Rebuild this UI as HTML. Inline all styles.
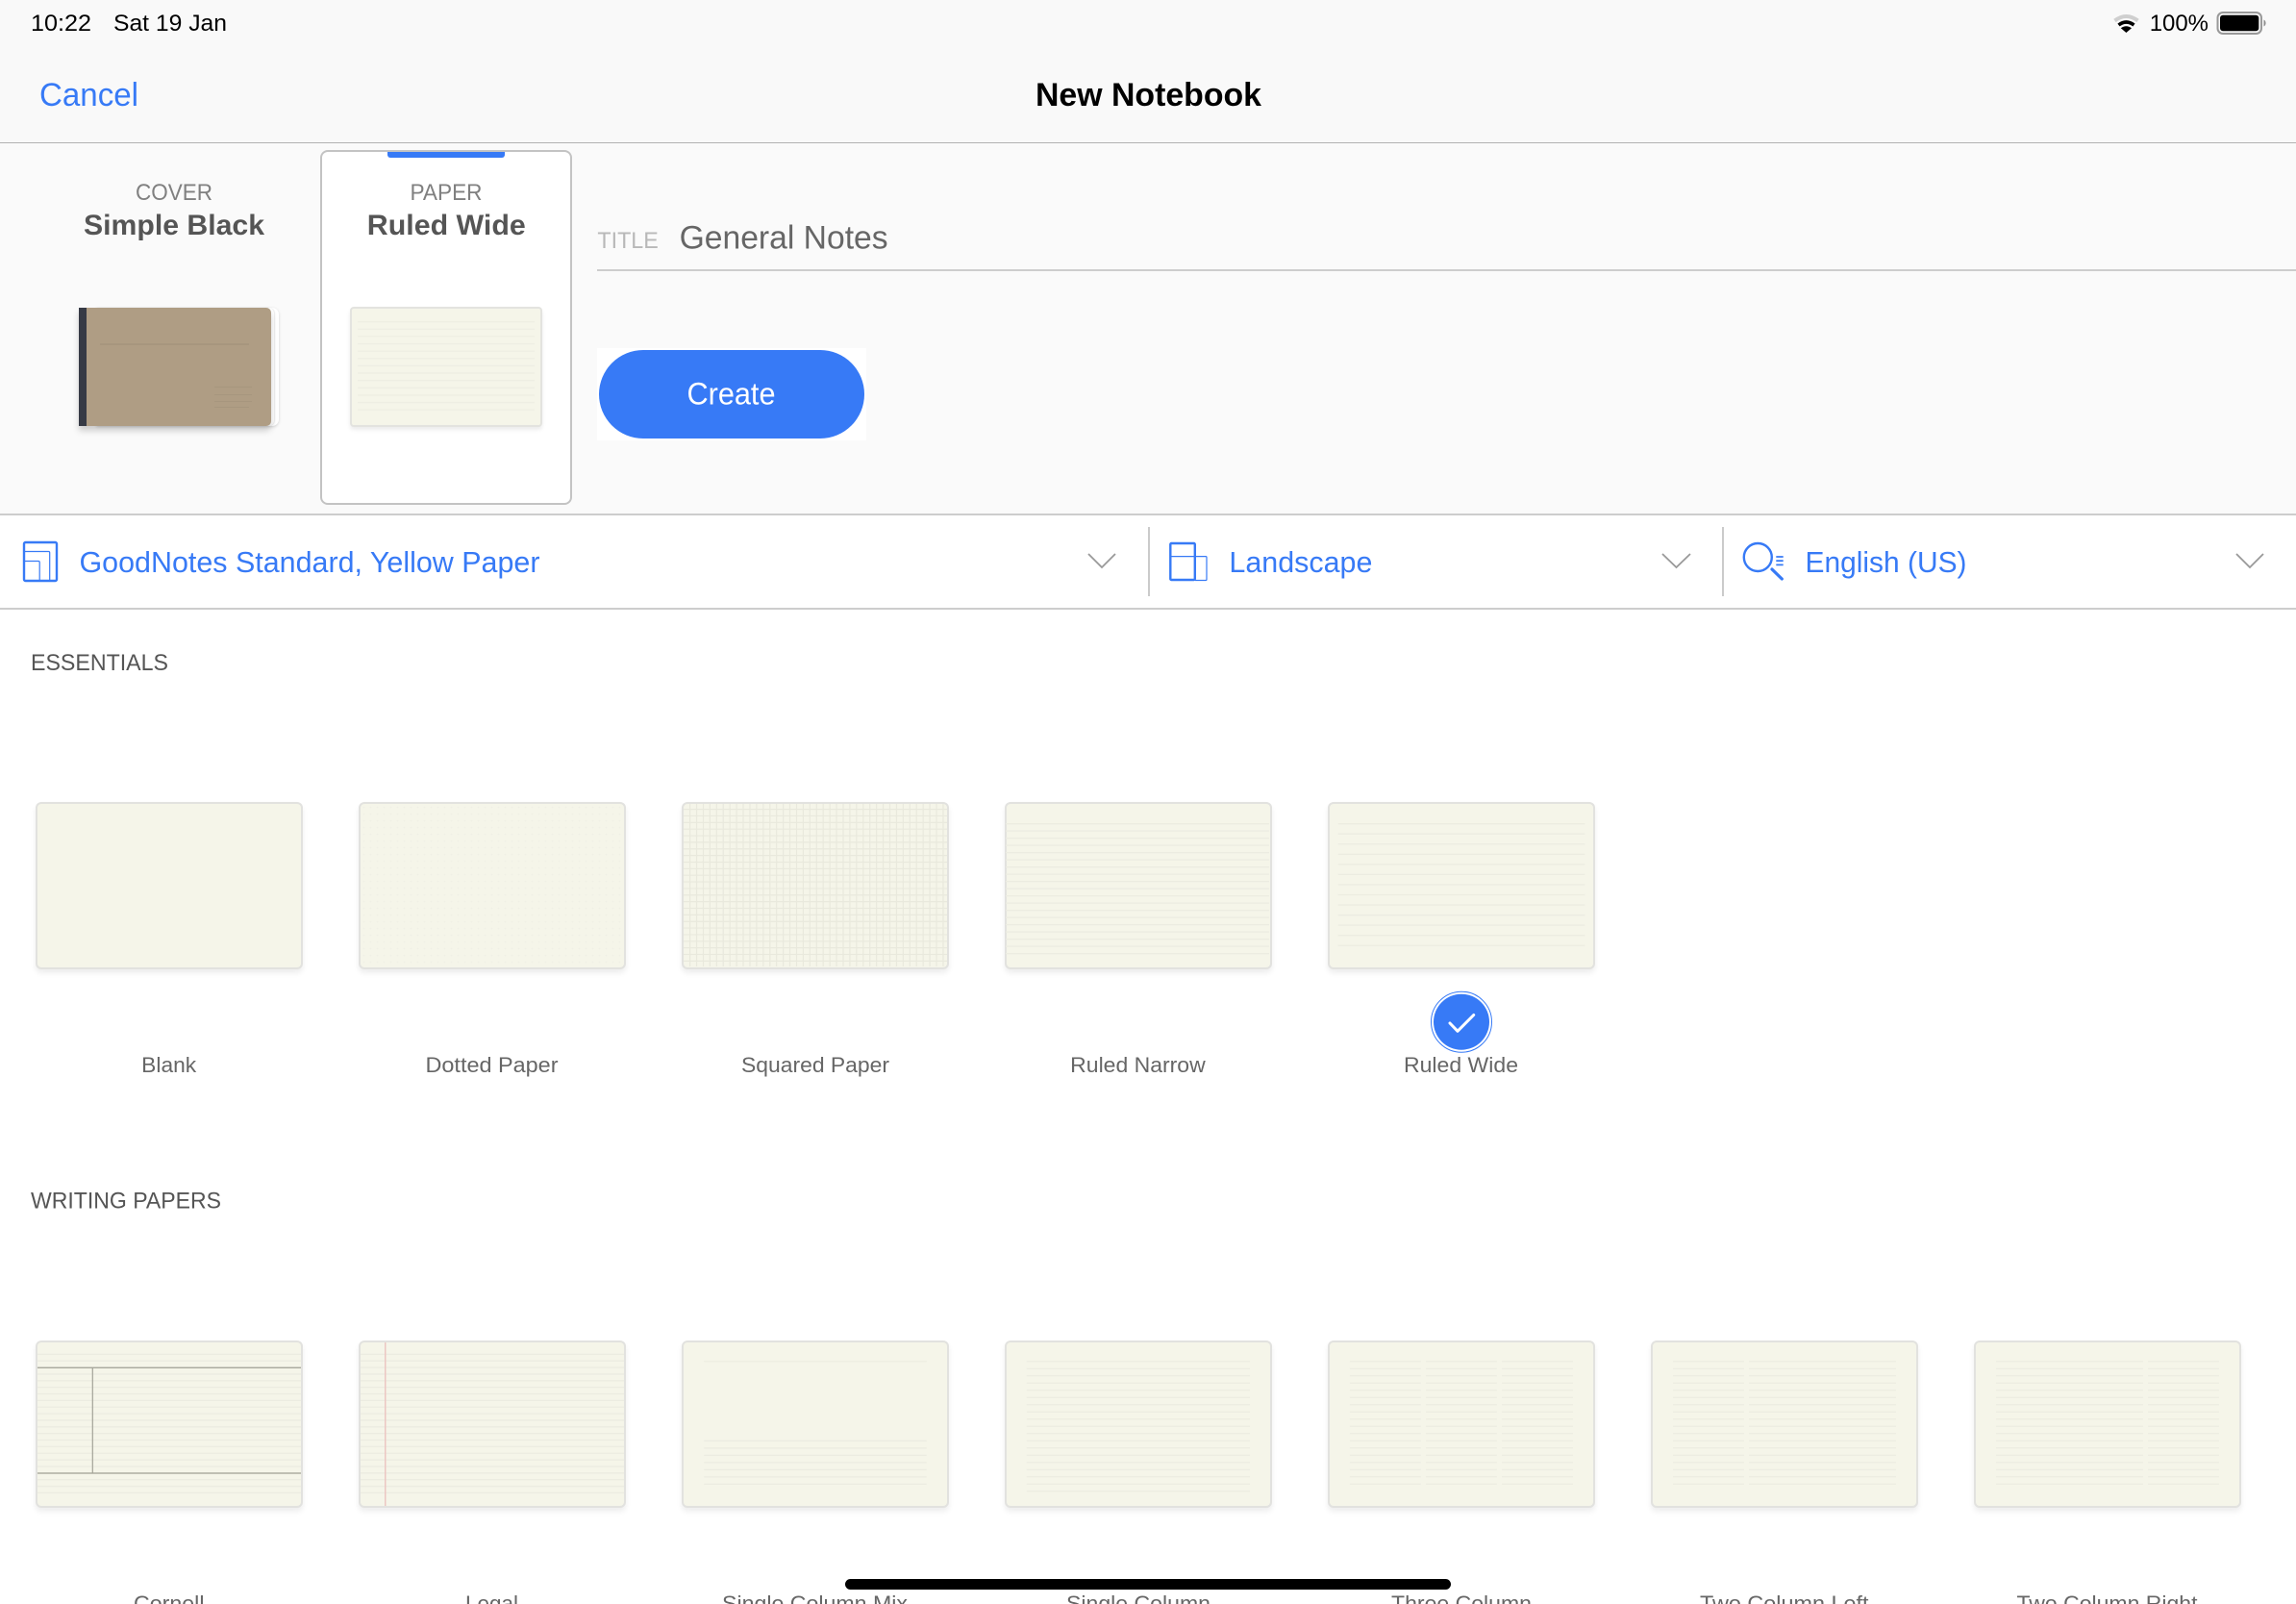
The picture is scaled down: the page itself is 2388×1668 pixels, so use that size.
<!DOCTYPE html>
<html lang="en">
<head>
<meta charset="utf-8">
<title>New Notebook</title>
<style>
html,body{margin:0;padding:0;width:2388px;height:1668px;overflow:hidden;background:#fff;}
body{position:relative;font-family:"Liberation Sans",sans-serif;}
div{position:absolute;box-sizing:border-box;}
.p{width:278px;height:174px;background:#f5f5e9;border:2px solid #e2e2df;border-radius:6px;box-shadow:0 4px 6px rgba(0,0,0,.07);}
.r1{top:834px}.r2{top:1394px}
svg{position:absolute;left:0;top:0}
text{font-family:"Liberation Sans",sans-serif}
.n{fill:none;stroke:#ecece1;stroke-dasharray:1.3 6.2}
.w{fill:none;stroke:#ecece1;stroke-dasharray:1.3 9.25}
.t{fill:none;stroke:#ecece1;stroke-dasharray:1.3 5.56}
</style>
</head>
<body>
<!-- header -->
<div style="left:0;top:0;width:2388px;height:148px;background:#f9f9f9"></div>
<div style="left:0;top:148px;width:2388px;height:1.5px;background:#b2b2b2"></div>
<!-- panel -->
<div style="left:0;top:149px;width:2388px;height:385px;background:#fafafa"></div>
<div style="left:0;top:534px;width:2388px;height:2px;background:#cdcdcd"></div>
<div style="left:0;top:632px;width:2388px;height:2px;background:#cdcdcd"></div>
<div style="left:1194px;top:548px;width:2px;height:72px;background:#cbcbcb"></div>
<div style="left:1791px;top:548px;width:2px;height:72px;background:#cbcbcb"></div>

<!-- cover -->
<div style="left:100px;top:320px;width:190px;height:123px;background:#fff;border-radius:0 7px 7px 0;box-shadow:0 1px 3px rgba(0,0,0,.16)"></div>
<div style="left:100px;top:319.5px;width:185px;height:123.5px;background:#fff;border-radius:0 6px 6px 0;box-shadow:1px 0 1px rgba(0,0,0,.08)"></div>
<div style="left:81.5px;top:319.5px;width:200px;height:123.5px;background:#af9d84;border-radius:0 5px 5px 0;box-shadow:0 5px 7px rgba(0,0,0,.18)"></div>
<div style="left:81.5px;top:319.5px;width:8px;height:123.5px;background:#363a45"></div>
<div style="left:103.5px;top:357px;width:155px;height:1.5px;background:#a7967e"></div>
<div style="left:222.5px;top:401.5px;width:39px;height:1px;background:#a7967e"></div>
<div style="left:222.5px;top:409.5px;width:39px;height:1px;background:#a7967e"></div>
<div style="left:222.5px;top:416.5px;width:39px;height:1px;background:#a7967e"></div>
<div style="left:222.5px;top:423px;width:36px;height:1px;background:#a7967e"></div>

<!-- paper card -->
<div style="left:333px;top:156px;width:262px;height:369px;background:#fff;border:2px solid #c3c3c3;border-radius:8px"></div>
<div style="left:403px;top:158px;width:122px;height:6px;background:#377af6;border-radius:0 0 3px 3px"></div>
<div style="left:364px;top:318.5px;width:199.5px;height:125px;background:#f5f5e9;border:2px solid #e3e3df;border-radius:4px;box-shadow:0 3px 4px rgba(0,0,0,.08)"></div>

<!-- title -->
<div style="left:621px;top:280px;width:1767px;height:2px;background:#cdcdcd"></div>
<!-- create -->
<div style="left:621px;top:362px;width:279.5px;height:96px;background:#fff"></div>
<div style="left:623px;top:364px;width:276px;height:92px;background:#377af6;border-radius:46px"></div>

<!-- row 1 -->
<div class="p r1" style="left:37px"></div>
<div class="p r1" style="left:373px;background-color:#f5f5e9;background-image:radial-gradient(circle,#f0f0e5 0.7px,transparent 1px);background-size:7px 7px"></div>
<div class="p r1" style="left:709px"></div>
<div class="p r1" style="left:1045px"></div>
<div class="p r1" style="left:1381px"></div>

<!-- row 2 -->
<div class="p r2" style="left:37px"></div>
<div class="p r2" style="left:373px"></div>
<div class="p r2" style="left:709px"></div>
<div class="p r2" style="left:1045px"></div>
<div class="p r2" style="left:1381px"></div>
<div class="p r2" style="left:1717px"></div>
<div class="p r2" style="left:2053px"></div>

<svg width="2388" height="1668" viewBox="0 0 2388 1668" xmlns="http://www.w3.org/2000/svg">
  <!-- paper rulings -->
  <path d="M464 334V427" fill="none" stroke="#eeeee3" stroke-width="184" stroke-dasharray="1.3 6.33"/>
  <!-- squared -->
  <path d="M848 841V1005" fill="none" stroke="#e9e9dd" stroke-width="274" stroke-dasharray="1.2 5.66"/>
  <path d="M717 920.5H985" fill="none" stroke="#e9e9dd" stroke-width="169" stroke-dasharray="1.2 5.73"/>
  <!-- narrow / wide -->
  <path class="n" d="M1183 856V992.4" stroke-width="274"/>
  <path class="w" d="M1520 856V983.9" stroke-width="256.6"/>
  <!-- cornell + legal -->
  <path class="t" d="M176 1407.7V1553" stroke-width="274"/>
  <path class="t" d="M512 1407.7V1553" stroke-width="274"/>
  <rect x="39" y="1421.6" width="274" height="1.4" fill="#a9a99e"/>
  <rect x="39" y="1531.3" width="274" height="1.4" fill="#a9a99e"/>
  <rect x="95.7" y="1422" width="1.2" height="110" fill="#a3a398"/>
  <rect x="400" y="1396" width="1.5" height="170" fill="#ecc6c2"/>
  <!-- single column mix -->
  <path class="n" d="M848 1415.1V1416.4" stroke-width="231.5"/>
  <path class="n" d="M848 1497.7V1544" stroke-width="231.5"/>
  <!-- single column -->
  <path class="n" d="M1183.9 1415.1V1551.4" stroke-width="232.2"/>
  <!-- three column -->
  <path class="n" d="M1440.85 1415.1V1544" stroke-width="73.9"/>
  <path class="n" d="M1519.95 1415.1V1544" stroke-width="73.9"/>
  <path class="n" d="M1599 1415.1V1544" stroke-width="74"/>
  <!-- two column left -->
  <path class="n" d="M1777 1415.1V1544" stroke-width="74"/>
  <path class="n" d="M1895.5 1415.1V1544" stroke-width="153"/>
  <!-- two column right -->
  <path class="n" d="M2152.5 1415.1V1544" stroke-width="153"/>
  <path class="n" d="M2271 1415.1V1544" stroke-width="74"/>

  <!-- status bar -->
  <text x="32" y="32" font-size="24" fill="#000" textLength="63" lengthAdjust="spacingAndGlyphs">10:22</text>
  <text x="118" y="32" font-size="24" fill="#000" textLength="118" lengthAdjust="spacingAndGlyphs">Sat 19 Jan</text>
  <text x="2235.7" y="32" font-size="24" fill="#000" textLength="61.3" lengthAdjust="spacingAndGlyphs">100%</text>
  <!-- nav -->
  <text x="41" y="110" font-size="34" fill="#377af6" textLength="103" lengthAdjust="spacingAndGlyphs">Cancel</text>
  <text x="1077" y="110" font-size="34" font-weight="bold" fill="#000" textLength="235" lengthAdjust="spacingAndGlyphs">New Notebook</text>
  <!-- panel -->
  <text x="141" y="208" font-size="24" fill="#808080" textLength="80" lengthAdjust="spacingAndGlyphs">COVER</text>
  <text x="87" y="244" font-size="30" font-weight="bold" fill="#555" textLength="188" lengthAdjust="spacingAndGlyphs">Simple Black</text>
  <text x="426.5" y="208" font-size="24" fill="#808080" textLength="75" lengthAdjust="spacingAndGlyphs">PAPER</text>
  <text x="381.8" y="244" font-size="30" font-weight="bold" fill="#555" textLength="165" lengthAdjust="spacingAndGlyphs">Ruled Wide</text>
  <text x="621.4" y="258" font-size="24" fill="#b8b8b8" textLength="63.4" lengthAdjust="spacingAndGlyphs">TITLE</text>
  <text x="706.6" y="258.5" font-size="34" fill="#666" textLength="217" lengthAdjust="spacingAndGlyphs">General Notes</text>
  <text x="714.5" y="420.5" font-size="32" fill="#fff" textLength="92" lengthAdjust="spacingAndGlyphs">Create</text>
  <!-- toolbar -->
  <text x="82.5" y="595" font-size="31" fill="#377af6" textLength="479" lengthAdjust="spacingAndGlyphs">GoodNotes Standard, Yellow Paper</text>
  <text x="1278.4" y="595" font-size="31" fill="#377af6" textLength="149" lengthAdjust="spacingAndGlyphs">Landscape</text>
  <text x="1877.5" y="595" font-size="31" fill="#377af6" textLength="168" lengthAdjust="spacingAndGlyphs">English (US)</text>
  <!-- sections -->
  <text x="32" y="697" font-size="24" fill="#555" textLength="143" lengthAdjust="spacingAndGlyphs">ESSENTIALS</text>
  <text x="32" y="1256.5" font-size="24" fill="#555" textLength="198" lengthAdjust="spacingAndGlyphs">WRITING PAPERS</text>
  <!-- labels -->
  <g font-size="22" fill="#666">
    <text x="147.2" y="1115" textLength="57" lengthAdjust="spacingAndGlyphs">Blank</text>
    <text x="442.5" y="1115" textLength="138" lengthAdjust="spacingAndGlyphs">Dotted Paper</text>
    <text x="771" y="1115" textLength="154" lengthAdjust="spacingAndGlyphs">Squared Paper</text>
    <text x="1113.2" y="1115" textLength="140.5" lengthAdjust="spacingAndGlyphs">Ruled Narrow</text>
    <text x="1460" y="1115" textLength="119" lengthAdjust="spacingAndGlyphs">Ruled Wide</text>
    <text x="139" y="1675" textLength="73.5" lengthAdjust="spacingAndGlyphs">Cornell</text>
    <text x="484" y="1675" textLength="55" lengthAdjust="spacingAndGlyphs">Legal</text>
    <text x="751" y="1675" textLength="193" lengthAdjust="spacingAndGlyphs">Single Column Mix</text>
    <text x="1109" y="1675" textLength="150" lengthAdjust="spacingAndGlyphs">Single Column</text>
    <text x="1447" y="1675" textLength="146" lengthAdjust="spacingAndGlyphs">Three Column</text>
    <text x="1768" y="1675" textLength="175.5" lengthAdjust="spacingAndGlyphs">Two Column Left</text>
    <text x="2097.5" y="1675" textLength="188" lengthAdjust="spacingAndGlyphs">Two Column Right</text>
  </g>

  <!-- wifi -->
  <path d="M2199.5 21.5Q2211.4 12.5 2223.5 21.5" fill="none" stroke="#cfcfcf" stroke-width="4"/>
  <path d="M2203.5 26Q2211.4 20 2219.5 26" fill="none" stroke="#000" stroke-width="3.6"/>
  <path d="M2205.8 29.2Q2211.4 25.2 2217 29.2L2211.4 34Z" fill="#000"/>
  <!-- battery -->
  <rect x="2306.5" y="13" width="45.5" height="22" rx="5.5" fill="none" stroke="#999" stroke-width="2"/>
  <rect x="2309" y="15.7" width="40.3" height="16.6" rx="3" fill="#000"/>
  <path d="M2354.5 20.5a4 4 0 0 1 0 7z" fill="#8f8f8f"/>

  <!-- toolbar icon 1 -->
  <rect x="25" y="564" width="34" height="40" rx="1.5" fill="none" stroke="#377af6" stroke-width="2.4"/>
  <path d="M25.5 573.5H50.5a1.2 1.2 0 0 1 1.2 1.2V604M25.5 583.5H40a1.2 1.2 0 0 1 1.2 1.2V604" fill="none" stroke="#377af6" stroke-width="1.2"/>
  <!-- toolbar icon 2 -->
  <rect x="1217.3" y="565" width="25.5" height="38" rx="1" fill="none" stroke="#377af6" stroke-width="2.4"/>
  <path d="M1217.5 578.6H1254a1 1 0 0 1 1 1V602.5a1 1 0 0 1 -1 1H1243" fill="none" stroke="#377af6" stroke-width="1.2"/>
  <!-- toolbar icon 3 -->
  <circle cx="1828.3" cy="579.5" r="14.5" fill="none" stroke="#377af6" stroke-width="2.4"/>
  <path d="M1843 592L1853.3 602" fill="none" stroke="#377af6" stroke-width="3.2" stroke-linecap="round"/>
  <path d="M1847.3 579H1854.7M1847.3 583.2H1854.7M1847.3 587.4H1854.7" fill="none" stroke="#377af6" stroke-width="1.8"/>
  <!-- chevrons -->
  <path d="M1132 576L1146 590L1160 576M1729 576L1743.5 590L1758 576M2326 576L2340 590L2354 576" fill="none" stroke="#999" stroke-width="1.8"/>

  <!-- selected check -->
  <circle cx="1520" cy="1062.7" r="31.5" fill="#fff" stroke="#377af6" stroke-width="1"/>
  <circle cx="1520" cy="1062.7" r="29" fill="#377af6"/>
  <path d="M1508 1064L1516 1072.3L1532.7 1055.5" fill="none" stroke="#fff" stroke-width="3" stroke-linecap="round" stroke-linejoin="round"/>

  <!-- home indicator -->
  <rect x="879" y="1642" width="630" height="11" rx="5.5" fill="#000"/>
</svg>
</body>
</html>
